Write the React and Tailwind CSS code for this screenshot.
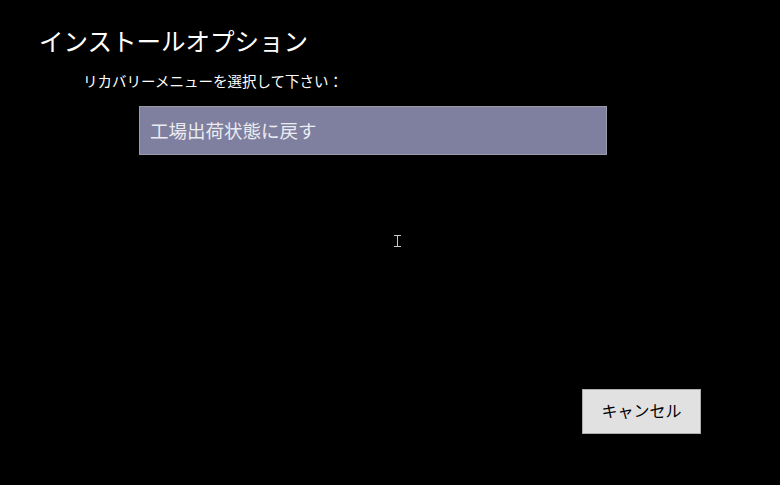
export default function App() {
  return (
    <div
      className="relative flex h-[485px] w-full flex-col overflow-hidden bg-black text-white"
      style={{ fontFamily: '"Noto Sans CJK JP", "Noto Sans", sans-serif' }}
    >
      <h1 className="ml-[39px] mt-[27px] text-[24.5px] leading-[28px] font-normal">インストールオプション</h1>
      <p className="ml-[83px] mt-[17px] text-[14.5px] leading-[18px]">リカバリーメニューを選択して下さい：</p>
      <div className="ml-[139px] mt-[16px] flex h-[49px] w-[468px] items-center border border-[#9a9aa8] bg-[#7f7f9f] px-[10px]">
        <span className="text-[18.5px] leading-none text-[#ececf0]">工場出荷状態に戻す</span>
      </div>

      {/* text cursor */}
      <svg
        className="absolute left-[394px] top-[235px]"
        width="7"
        height="12"
        viewBox="0 0 7 12"
        fill="none"
        stroke="#c8c8c8"
        strokeWidth="1"
      >
        <path d="M0 0.5h7M0 11.5h7M3.5 0.5v11" />
      </svg>

      <div className="mt-auto mb-[51px] mr-[79px] flex justify-end">
        <button
          type="button"
          className="flex h-[45px] w-[119px] items-center justify-center border border-[#adadad] bg-[#e1e1e1] pb-[3px] text-[16px] text-black"
        >
          キャンセル
        </button>
      </div>
    </div>
  );
}
